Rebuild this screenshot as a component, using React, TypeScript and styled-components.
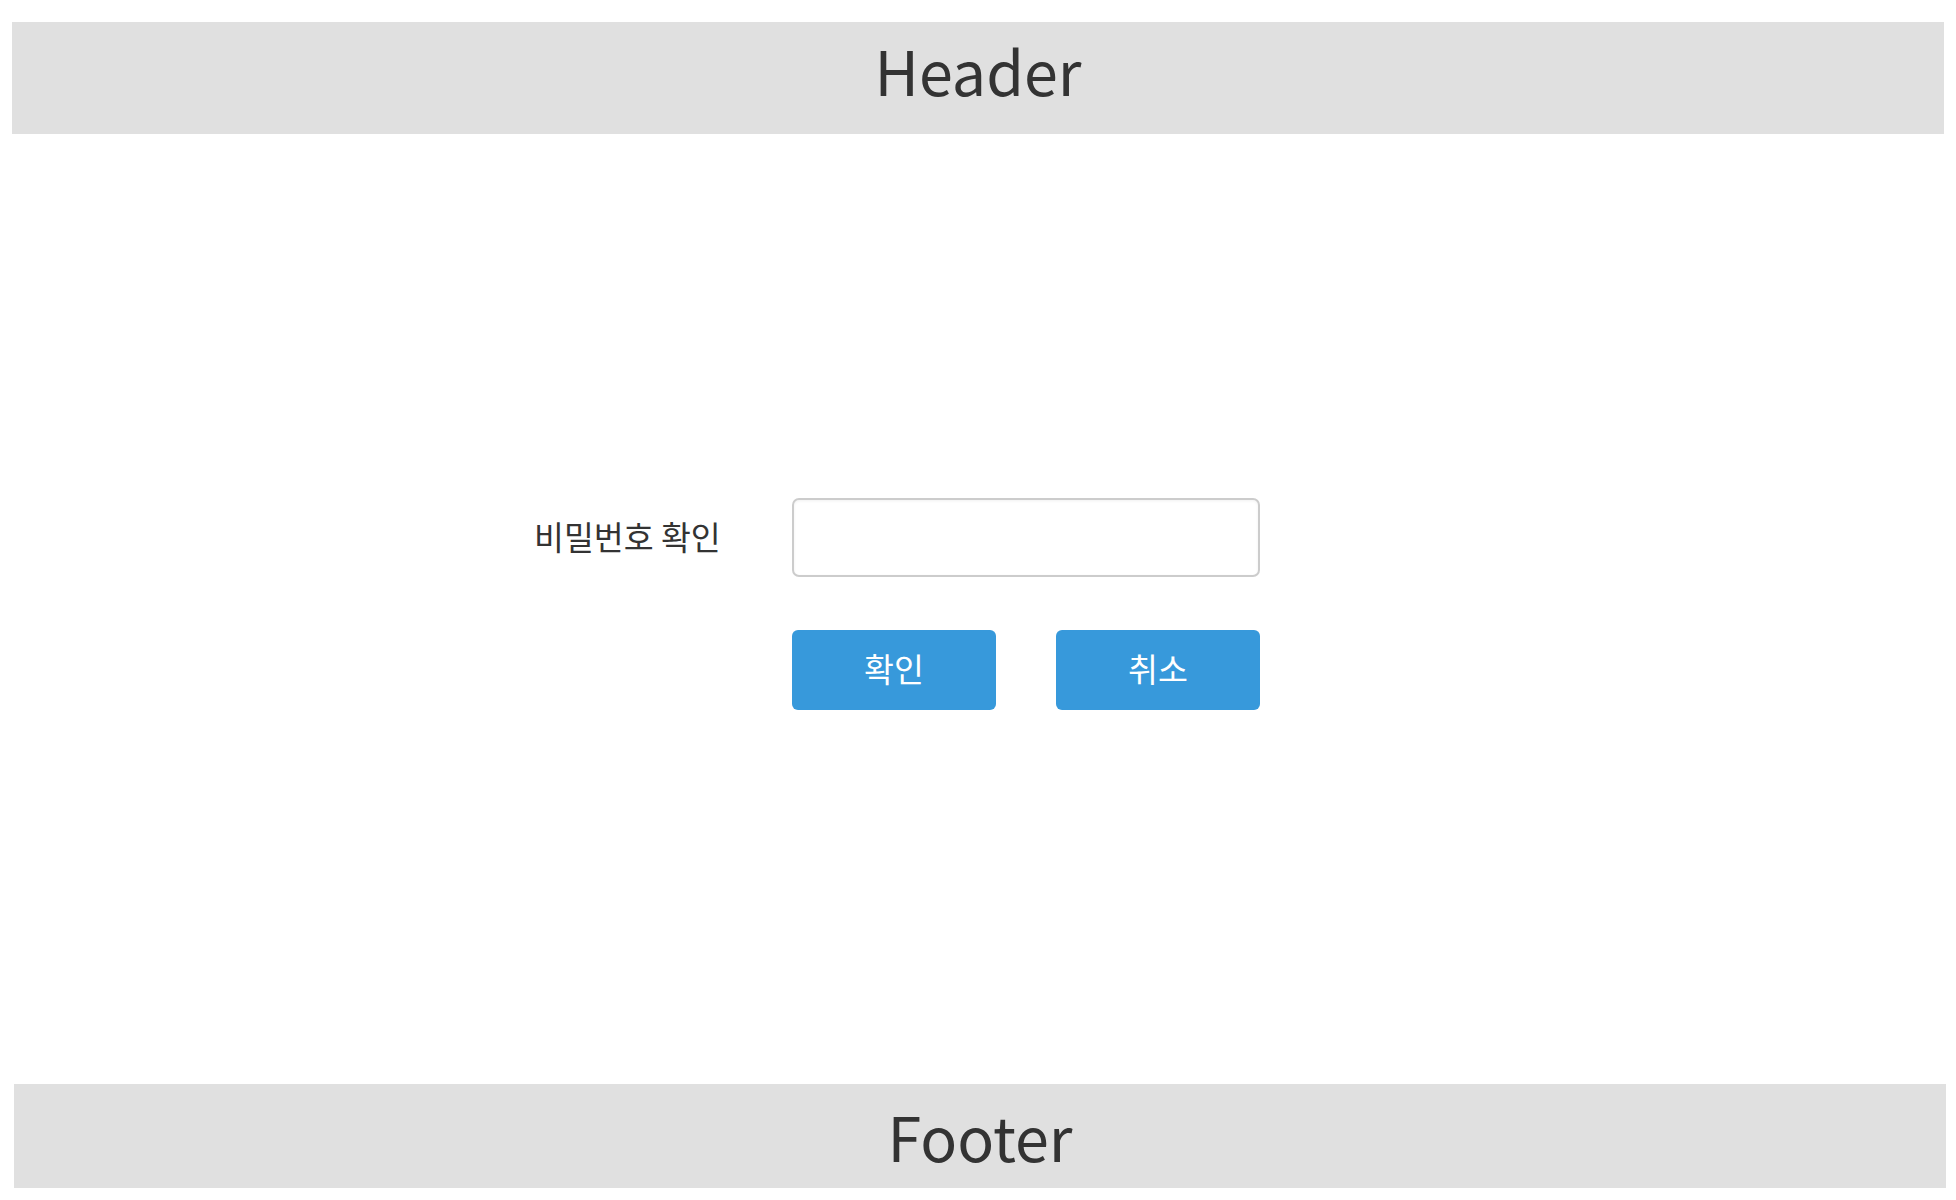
import React from "react";
import styled, { createGlobalStyle } from "styled-components";

const Global = createGlobalStyle`
  html, body { margin: 0; padding: 0; background: #ffffff; }
  body { font-family: "Noto Sans CJK KR", "Noto Sans", sans-serif; color: #333333; }
  * { box-sizing: border-box; }
`;

const Page = styled.div`
  width: 1956px;
  height: 1200px;
  display: flex;
  flex-direction: column;
  padding-top: 22px;
`;

const Bar = styled.div<{ $height: number; $left: number; $top: number }>`
  width: 1932px;
  height: ${(p) => p.$height}px;
  margin-left: ${(p) => p.$left}px;
  padding-top: ${(p) => p.$top}px;
  background: #e0e0e0;
  display: flex;
  align-items: flex-start;
  justify-content: center;
  font-size: 61px;
  color: #333333;
  line-height: 1;
`;

const Main = styled.main`
  height: 950px;
  padding-top: 364px;
  padding-left: 534px;
`;

const Form = styled.form`
  display: grid;
  grid-template-columns: 258px 468px;
  row-gap: 53px;
  align-items: center;
`;

const Label = styled.label`
  font-size: 32.5px;
  color: #333333;
  padding-bottom: 5px;
`;

const Input = styled.input`
  width: 468px;
  height: 79px;
  border: 2px solid #cccccc;
  border-radius: 7px;
  box-shadow: inset 0 1px 3px rgba(0, 0, 0, 0.06);
  font-size: 28px;
  padding: 0 14px;
  outline: none;
`;

const Buttons = styled.div`
  grid-column: 2;
  display: flex;
  gap: 60px;
`;

const Button = styled.button`
  width: 204px;
  height: 80px;
  border: none;
  border-radius: 6px;
  padding: 0 0 5px;
  background: #3799db;
  color: #ffffff;
  font-family: "Noto Sans CJK KR", "Noto Sans", sans-serif;
  font-size: 32.5px;
  cursor: pointer;
`;

export default function App() {
  return (
    <>
      <Global />
      <Page>
        <Bar $height={112} $left={12} $top={17}>Header</Bar>
        <Main>
          <Form onSubmit={(e) => e.preventDefault()}>
            <Label htmlFor="pw">비밀번호 확인</Label>
            <Input id="pw" type="password" />
            <Buttons>
              <Button type="submit">확인</Button>
              <Button type="button">취소</Button>
            </Buttons>
          </Form>
        </Main>
        <Bar $height={104} $left={14} $top={21}>Footer</Bar>
      </Page>
    </>
  );
}
